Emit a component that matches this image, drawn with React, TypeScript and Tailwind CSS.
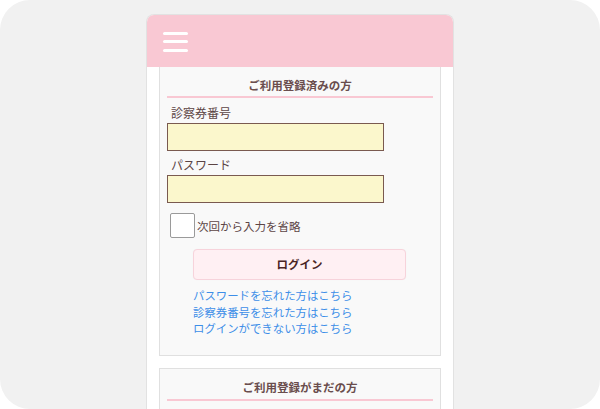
import React from "react";

export default function App() {
  const font = { fontFamily: '"Noto Sans CJK JP", "Noto Sans", sans-serif' };
  return (
    <div className="w-[600px] h-[409px] bg-white overflow-hidden" style={font}>
      <div className="w-[600px] h-[409px] rounded-[30px] bg-[#f1f1f1] overflow-hidden flex justify-center pt-[14px]">
        <div className="w-[308px] h-[420px] bg-white border border-[#e2e2e2] border-b-0 rounded-t-[8px] flex flex-col overflow-hidden">
          <header className="h-[52px] shrink-0 bg-[#f9c8d3] flex items-center pl-[16px]">
            <div className="flex flex-col gap-[5.5px] pt-[1px]">
              <span className="block w-[25px] h-[3px] rounded-full bg-white" />
              <span className="block w-[25px] h-[3px] rounded-full bg-white" />
              <span className="block w-[25px] h-[3px] rounded-full bg-white" />
            </div>
          </header>
          <div className="px-[12px] flex flex-col gap-[12px]">
            <section className="bg-[#f9f9f9] border border-[#e0e0e0] border-t-0 pb-[18px]">
              <h2 className="text-center text-[11.5px] font-bold text-[#6a4d4d] leading-[18px] pt-[9px] pb-[2px]">
                ご利用登録済みの方
              </h2>
              <div className="mx-[7px] h-[2px] bg-[#f9c8d3]" />
              <div className="px-[7px]">
                <div className="pl-[4px] pt-[7px] text-[12px] leading-[16px] text-[#5c4545]">診察券番号</div>
                <div className="mt-[2px] w-[217px] h-[28px] bg-[#fbf7cc] border border-[#7a5a50]" />
                <div className="pl-[4px] pt-[6px] text-[12px] leading-[16px] text-[#5c4545]">パスワード</div>
                <div className="mt-[2px] w-[217px] h-[28px] bg-[#fbf7cc] border border-[#7a5a50]" />
                <div className="flex items-center mt-[10px] pl-[3px]">
                  <div className="w-[25px] h-[25px] bg-white border border-[#9a9a9a] rounded-[2px]" />
                  <span className="ml-[2px] text-[11.5px] leading-[16px] text-[#5c4545]">次回から入力を省略</span>
                </div>
                <div className="ml-[26px] mt-[11px] w-[213px] h-[31px] bg-[#fff0f3] border border-[#f7d3db] rounded-[4px] flex items-center justify-center shadow-[0_0_1px_rgba(0,0,0,0.05)]">
                  <span className="text-[11.5px] font-bold text-[#4a2424]">ログイン</span>
                </div>
                <div className="ml-[26px] mt-[7px] flex flex-col text-[11.4px] leading-[16.5px] text-[#3d8ee8]">
                  <span>パスワードを忘れた方はこちら</span>
                  <span>診察券番号を忘れた方はこちら</span>
                  <span>ログインができない方はこちら</span>
                </div>
              </div>
            </section>
            <section className="bg-[#f9f9f9] border border-[#e0e0e0] h-[80px]">
              <h2 className="text-center text-[11.5px] font-bold text-[#6a4d4d] leading-[18px] pt-[9px] pb-[3px]">
                ご利用登録がまだの方
              </h2>
              <div className="mx-[7px] h-[2px] bg-[#f9c8d3]" />
            </section>
          </div>
        </div>
      </div>
    </div>
  );
}
